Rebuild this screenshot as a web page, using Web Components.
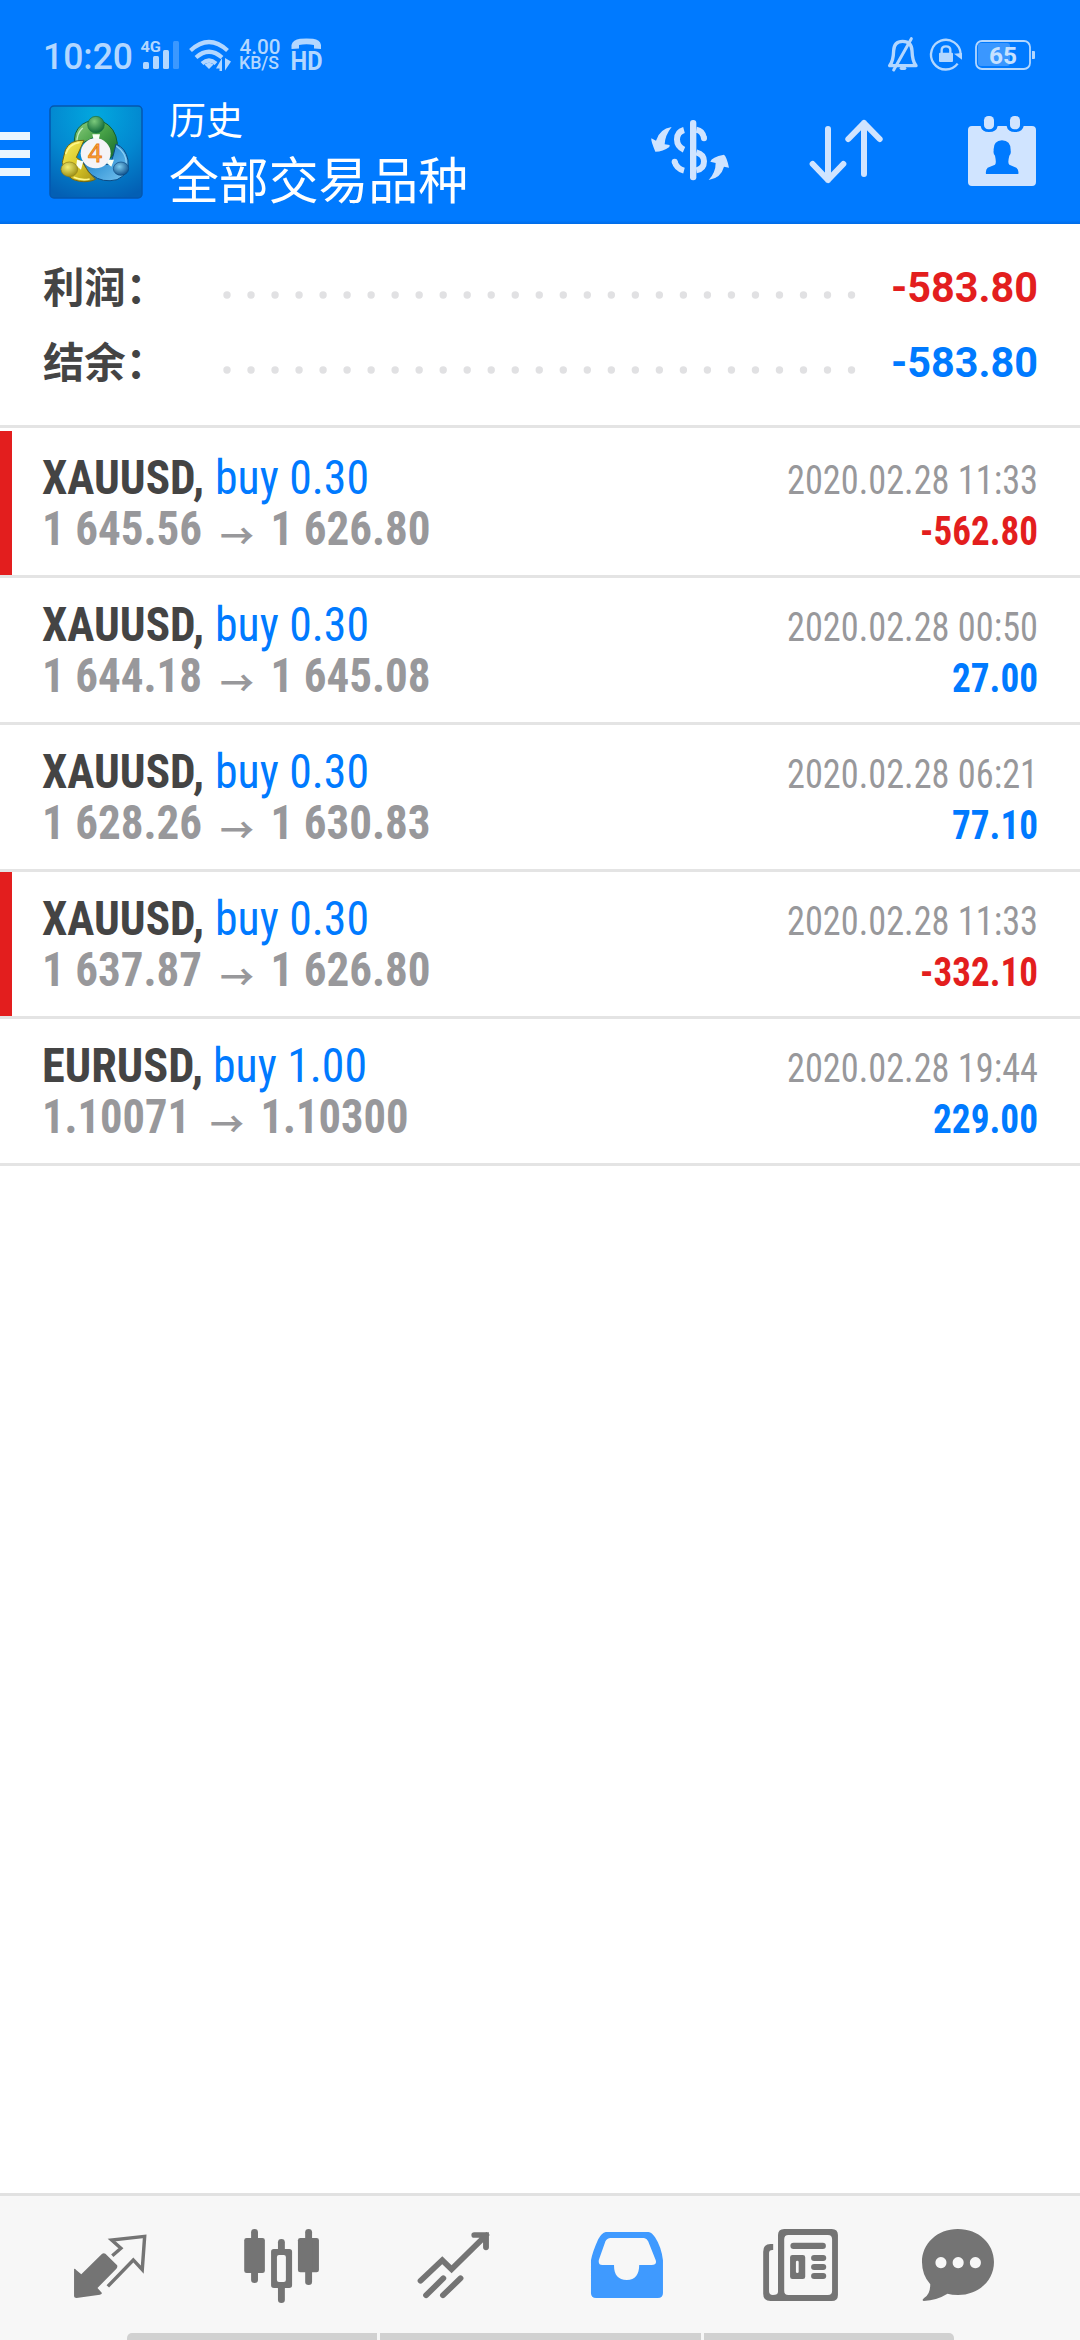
<!DOCTYPE html>
<html lang="zh-CN">
<head>
<meta charset="utf-8">
<title>历史</title>
<style>
html,body{margin:0;padding:0;background:#fff}
body{font-family:Roboto,"Noto Sans CJK SC",sans-serif}
</style>
</head>
<body>
<history-app></history-app>
<script>
class BaseElement extends HTMLElement {
  connectedCallback() {
    if (this.shadowRoot) return;
    this.attachShadow({ mode: 'open' }).innerHTML = this.render();
  }
  a(name, fallback = '') { return this.getAttribute(name) ?? fallback; }
}

/* A single line of text set to an exact advance width. */
customElements.define('fit-text', class extends BaseElement {
  render() {
    const w = this.a('w');
    return `<style>:host{display:block;flex:none}svg{display:block;overflow:visible}
      text{font:${this.a('weight', '400')} ${this.a('size')}px ${this.a('family', "'Roboto Condensed',Roboto,'Noto Sans CJK SC',sans-serif")};fill:currentColor;white-space:pre}</style>
      <svg width="${w}" height="${this.a('h')}"><text x="0" y="${this.a('base')}" textLength="${w}" lengthAdjust="spacingAndGlyphs">${this.a('text')}</text></svg>`;
  }
});

customElements.define('status-bar', class extends BaseElement {
  render() {
    return `<style>:host{display:flex;height:80px;color:#b3d7ff;padding:0 44px 0 43px}
      svg{display:block;flex:none;fill:currentColor;overflow:visible}.sp{flex:1}
      text{font-family:Roboto,sans-serif}</style>
    <fit-text w="90" size="36" h="80" base="69" weight="500" family="Roboto,sans-serif" text="10:20"></fit-text>
    <svg width="50" height="80" viewBox="133 0 50 80"><text x="140.5" y="52" font-size="15.5" font-weight="700" textLength="20.5" lengthAdjust="spacingAndGlyphs">4G</text>
      <rect x="143" y="62" width="6" height="7" rx="1.5"/><rect x="153" y="56" width="6" height="13" rx="1.5"/><rect x="163" y="50" width="6" height="19" rx="1.5"/><rect x="173" y="41" width="6" height="28" rx="1.5" opacity=".33"/></svg>
    <svg width="55" height="80" viewBox="183 0 55 80"><g fill="none" stroke="currentColor" stroke-width="4.2"><path d="M190.5 50.500Q209 33.500 227.500 50.500M196 57.500Q209 46 222 57.500M202 63.500Q209 57.500 216 63.500"/></g><path d="M204.500 64.500Q209 61 213.500 64.500L209 69z"/><path d="M216 68.500L222 58V71H219.500V68.500zM225 58L231 61.500L225 70.500z"/></svg>
    <svg width="52" height="80" viewBox="238 0 52 80"><text x="239.500" y="53.500" font-size="20.500" font-weight="500" textLength="41" lengthAdjust="spacingAndGlyphs">4.00</text><text x="239" y="69" font-size="18" font-weight="500" textLength="40" lengthAdjust="spacingAndGlyphs">KB/S</text></svg>
    <svg width="34" height="80" viewBox="290 0 34 80"><path d="M291.500 49V45Q293 39.500 300 38.800Q306.500 38.200 313 38.800Q320 39.500 321 45V49L314 48.500V45Q306.500 43.500 299 45V48.500z"/><text x="290.500" y="70" font-size="25" font-weight="700" textLength="32" lengthAdjust="spacingAndGlyphs">HD</text></svg>
    <span class="sp"></span>
    <svg width="46" height="80" viewBox="884 0 46 80"><g transform="translate(620 20) scale(.33333)" fill="none" stroke="currentColor" stroke-width="10"><path d="M809 137H888Q877 124 876 92Q875 64 848 64Q822 64 821 92Q820 124 809 137z" stroke-linejoin="round"/><path d="M821 150L874 56" stroke-linecap="round" stroke-width="9"/><path d="M844 145h10" stroke-linecap="round"/></g></svg>
    <svg width="44" height="80" viewBox="930 0 44 80"><g transform="translate(620 20) scale(.33333)"><path d="M1013 131A44.500 44.500 0 1 1 1022 102" fill="none" stroke="currentColor" stroke-width="7"/><path d="M1002 101L1026 119L1026 99z"/><rect x="957" y="98" width="42" height="28" rx="3"/><path d="M965 100V90Q965 79 978 79Q991 79 991 90V100" fill="none" stroke="currentColor" stroke-width="7"/></g></svg>
    <svg width="62" height="80" viewBox="974 0 62 80"><rect x="978" y="43" width="32" height="23" rx="3" opacity=".32"/><rect x="976" y="41" width="54" height="28" rx="6" fill="none" stroke="currentColor" stroke-width="1.800"/><path d="M1032 51h2q1 0 1 1v6q0 1-1 1h-2z"/><text x="989" y="63.500" font-size="23" font-weight="700" textLength="28" lengthAdjust="spacingAndGlyphs" fill="#c6e1ff">65</text></svg>`;
  }
});

customElements.define('mt-logo', class extends BaseElement {
  render() {
    return `<style>:host{display:block;flex:none}svg{display:block}</style>
    <svg width="96" height="144" viewBox="48 80 96 144"><defs>
      <radialGradient id="bg" cx=".5" cy=".1" r=".95"><stop offset="0" stop-color="#02a8df"/><stop offset=".55" stop-color="#0387d0"/><stop offset="1" stop-color="#035fb4"/></radialGradient>
      <linearGradient id="g" x2="1" y2="1"><stop offset="0" stop-color="#8fce80"/><stop offset=".5" stop-color="#46a046"/><stop offset="1" stop-color="#15692c"/></linearGradient>
      <linearGradient id="y" x2="1" y2="1"><stop offset="0" stop-color="#f5ee62"/><stop offset=".5" stop-color="#dcc928"/><stop offset="1" stop-color="#a59216"/></linearGradient>
      <linearGradient id="b" x2="1" y2="1"><stop offset="0" stop-color="#1e6aa5"/><stop offset=".5" stop-color="#3d9cda"/><stop offset="1" stop-color="#79c4f0"/></linearGradient>
      <radialGradient id="gb" cx=".4" cy=".3" r=".7"><stop offset="0" stop-color="#7cca7c"/><stop offset="1" stop-color="#126a38"/></radialGradient>
      <radialGradient id="yb" cx=".4" cy=".35" r=".7"><stop offset="0" stop-color="#f1ee75"/><stop offset="1" stop-color="#9a8c12"/></radialGradient>
      <radialGradient id="bb" cx=".4" cy=".35" r=".7"><stop offset="0" stop-color="#7fcdf0"/><stop offset="1" stop-color="#0b4b87"/></radialGradient></defs>
      <rect x="50" y="106" width="92" height="92" rx="4" fill="url(#bg)" stroke="#0457ae" stroke-width="1.500"/>
      <g transform="translate(0 80) scale(.33333)" stroke-width="3">
        <path d="M225 202Q216 155 247 133Q272 116 307 124Q347 142 352 190Q351 215 331 235L301 216L286 170L247 190z" fill="url(#g)" stroke="#125d36"/>
        <path d="M231 191Q229 160 248 144" fill="none" stroke="#c4edc0" stroke-width="4"/>
        <path d="M348 192Q377 204 384 240Q391 281 351 299Q308 310 276 285Q256 269 250 244L291 256L332 252L341 222z" fill="url(#b)" stroke="#0b4a83"/>
        <path d="M349 198Q378 218 379 248" fill="none" stroke="#8ed2f6" stroke-width="4"/>
        <path d="M252 181Q209 179 196 210L187 247Q196 299 238 304Q266 308 287 298Q263 278 247 246L229 232z" fill="url(#y)" stroke="#766711"/>
        <path d="M239 187Q206 192 197 222M221 292Q244 302 269 297" fill="none" stroke="#fff687" stroke-width="5"/>
        <path d="M231 239L250 244L243 269L229 257zM324 239H342L334 260L321 250zM277 163H300L296 180H281z" fill="#f8fff4"/>
        <ellipse cx="288" cy="134" rx="25" ry="25" fill="url(#gb)" stroke="#176f3e" stroke-width="2"/>
        <ellipse cx="208" cy="268" rx="25" ry="22" fill="url(#yb)" stroke="#8c7c1c" stroke-width="2"/>
        <ellipse cx="363" cy="266" rx="23" ry="20" fill="url(#bb)" stroke="#0b4a83" stroke-width="2"/>
        <circle cx="287" cy="220" r="45" fill="#f4f4f7"/>
        <text x="264" y="246" font-family="Open Sans,sans-serif" font-size="77" font-weight="400" textLength="42" lengthAdjust="spacingAndGlyphs" fill="#ffb04a" stroke="#e67a13" stroke-width="3">4</text>
      </g></svg>`;
  }
});

customElements.define('app-bar', class extends BaseElement {
  render() {
    return `<style>:host{display:flex;height:144px;color:#d0e4ff}
      svg{display:block;flex:none;fill:currentColor}.t{flex:1;color:#fff;padding-left:25px}</style>
    <svg width="48" height="144" viewBox="0 80 48 144" style="color:#eaf6ff"><path d="M0 132h30v8H0zM0 150h30v8H0zM0 168h30v8H0z"/></svg>
    <mt-logo></mt-logo>
    <div class="t"><fit-text w="74" size="37.500" h="64" base="54" family="'Noto Sans CJK SC',sans-serif" text="历史"></fit-text>
    <fit-text w="299" size="50" h="80" base="55" family="'Noto Sans CJK SC',sans-serif" text="全部交易品种"></fit-text></div>
    <svg width="120" height="144" viewBox="630 80 120 144"><g transform="translate(620 20) scale(.33333)">
      <rect x="210" y="300" width="19" height="181" rx="9"/>
      <path d="M192 330Q171 336 171 358Q171 380 192 389M229 329Q248 332 252 354M229 397Q252 403 252 424Q252 447 229 451M164 425Q169 446 192 452" fill="none" stroke="currentColor" stroke-width="18"/><circle cx="252" cy="355" r="9"/><circle cx="164" cy="425" r="9"/>
      <path d="M155 321Q118 327 108 362L94 355Q92 362 106 395Q129 395 148 381L149 375L134 373Q135 346 155 321z"/>
      <path d="M266 480Q287 458 287 429L271 425Q275 411 312 404Q320 410 327 443L312 440Q303 474 266 480z"/></g></svg>
    <svg width="160" height="144" viewBox="750 80 160 144"><g transform="translate(620 20) scale(.33333)" fill="none" stroke="currentColor" stroke-width="18" stroke-linecap="round" stroke-linejoin="round"><path d="M624 327V480M578 432L624 480L670 432M732 462V309M685 357L732 309L779 357"/></g></svg>
    <svg width="170" height="144" viewBox="910 80 170 144"><g transform="translate(620 20) scale(.33333)"><rect x="1092" y="288" width="30" height="40" rx="13"/><rect x="1170" y="288" width="30" height="40" rx="13"/>
      <path fill-rule="evenodd" d="M1056 318H1082Q1085 336 1107 336Q1130 336 1133 318H1160Q1163 336 1185 336Q1208 336 1211 318H1236Q1248 318 1248 330V486Q1248 498 1236 498H1056Q1044 498 1044 486V330Q1044 318 1056 318zM1146 361Q1119 362 1121 392Q1119 400 1125 407Q1130 430 1125 434L1103 443Q1096 449 1098 462H1195Q1197 449 1189 443L1168 434Q1162 430 1168 407Q1174 400 1172 392Q1173 362 1146 361z"/></g></svg>`;
  }
});

customElements.define('summary-line', class extends BaseElement {
  render() {
    const dots = Array.from({ length: 27 }, (_, i) => `<circle cx="${4 + i * 24.02}" cy="38" r="3.700"/>`).join('');
    return `<style>:host{display:flex;height:75px;padding:0 42px}
      .l{color:#444;width:180px;padding-left:1px}.d{display:block;fill:#e1e1e3;flex:1}.v{color:${this.a('color')}}</style>
    <fit-text class="l" w="124" size="42" h="75" base="46" weight="700" family="'Noto Sans CJK SC',sans-serif" text="${this.a('label')}"></fit-text>
    <svg class="d" height="75">${dots}</svg>
    <fit-text class="v" w="147" size="42" h="75" base="45" weight="700" family="Roboto,sans-serif" text="${this.a('value')}"></fit-text>`;
  }
});

customElements.define('trade-row', class extends BaseElement {
  render() {
    const eur = this.a('symbol').startsWith('EUR');
    const [w1, ax, bx, w2] = eur ? [148, 168, 218.5, 148] : [160, 178, 228.5, 160];
    const loss = this.a('profit').startsWith('-');
    const pw = loss ? 118 : { 5: 86, 6: 105 }[this.a('profit').length];
    return `<style>:host{display:flex;height:144px;border-bottom:3px solid #e4e4e4}
      .m{width:12px;background:${loss ? '#e31e1e' : 'transparent'};margin-right:30px}
      .l{flex:1}.top{display:flex}.s{color:#444;margin-right:${eur ? 10 : 11}px}.b,.win{color:#007aff}.loss{color:#e31e1e}
      .r{display:flex;flex-direction:column;align-items:flex-end;color:#98989b;padding-right:42px}
      svg{display:block;fill:#98989b;overflow:visible}text{font:700 48px 'Roboto Condensed',Roboto,sans-serif}
      .arrow{font:700 34px 'Noto Sans CJK SC',sans-serif}</style>
    <div class="m"></div>
    <div class="l"><div class="top"><fit-text class="s" w="${eur ? 161 : 162}" size="48" h="80" base="63" weight="700" text="${this.a('symbol')},"></fit-text><fit-text class="b" w="154" size="48" h="80" base="63" text="${this.a('action')}"></fit-text></div>
    <svg width="400" height="64"><text y="34"><tspan x="0" textLength="${w1}" lengthAdjust="spacingAndGlyphs">${this.a('open')}</tspan> <tspan class="arrow" x="${ax}" y="38" textLength="34" lengthAdjust="spacingAndGlyphs">→</tspan> <tspan x="${bx}" y="34" textLength="${w2}" lengthAdjust="spacingAndGlyphs">${this.a('close')}</tspan></text></svg></div>
    <div class="r"><fit-text w="251" size="40" h="80" base="63" text="${this.a('time')}"></fit-text>
    <fit-text class="${loss ? 'loss' : 'win'}" w="${pw}" size="40" h="64" base="34" weight="700" text="${this.a('profit')}"></fit-text></div>`;
  }
});

customElements.define('tab-bar', class extends BaseElement {
  render() {
    const icon = (x, w, body, color = '#747474') => `<svg width="${w}" height="137" viewBox="${x} 2196 ${w} 137" style="color:${color}"><g transform="translate(${x < 540 ? 0 : 540} 2180) scale(.34444 .33333)">${body}</g></svg>`;
    return `<style>:host{display:block;background:#f7f7f7;border-top:3px solid #e1e1e1;height:147px;box-sizing:border-box;flex:none}
      nav{display:flex;height:137px}svg{display:block;fill:currentColor;flex:none}
      .home{display:flex;gap:3px;height:7px;padding:0 126px 0 127px}.home i{background:#d1d1d1;flex:250 0 0}.home i:nth-child(2){flex-grow:320}
      .home i:first-child{border-top-left-radius:5px}.home i:last-child{border-top-right-radius:5px}</style>
    <nav>
    ${icon(0, 190, `<path d="M215 267Q218 264 222 271L236 283L295 223Q300 217 306 221L340 256Q342 261 338 266L283 324L296 339Q296 343 290 344L222 354Q215 354 215 349z"/><path d="M326 227L351 205L324 180L420 169L413 269L387 240L313 319" fill="none" stroke="currentColor" stroke-width="10"/>`)}
    ${icon(190, 180, `<rect x="709" y="174" width="60" height="105" rx="7"/><rect x="729" y="147" width="20" height="162" rx="10"/><rect x="865" y="174" width="61" height="103" rx="7"/><rect x="886" y="147" width="20" height="168" rx="10"/><rect x="807" y="177" width="20" height="45" rx="10"/><rect x="807" y="315" width="20" height="54" rx="10"/><path fill-rule="evenodd" d="M795 207h45q8 0 8 8v101q0 8-8 8h-45q-8 0-8-8V215q0-8 8-8zM810 225q-6 0-6 6v69q0 6 6 6h14q6 0 6-6v-69q0-6-6-6z"/>`)}
    ${icon(370, 170, `<path d="M1221 302L1284 241L1311 268L1412 165M1377 165H1411V202M1237 346L1287 295M1286 346L1337 295" fill="none" stroke="currentColor" stroke-width="17" stroke-linecap="round"/>`)}
    ${icon(540, 180, `<path fill-rule="evenodd" d="M191 156H315Q325 157 334 172Q352 200 357 241V339Q357 354 342 354H163Q148 354 148 339V241Q152 217 169 178Q179 158 191 156zM205 174Q194 175 190 184L171 239Q168 255 181 255H215C214 282 226 300 252 300C277 300 288 282 288 255H324Q340 255 336 241L314 184Q310 175 302 174z"/>`, '#3f9aff')}
    ${icon(720, 170, `<path fill-rule="evenodd" d="M709 147H847Q865 147 865 165V345Q865 363 847 363H669Q648 363 648 341V215Q648 192 669 192H677V210Q665 209 665 219V334Q665 345 676 345Q691 345 691 335V165Q691 147 709 147zM721 165Q709 165 709 178V332Q709 345 721 345H836Q848 345 848 332V178Q848 165 836 165z"/><rect x="727" y="188" width="103" height="19" rx="9"/><path fill-rule="evenodd" d="M733 225h30q7 0 7 7v58q0 7-7 7h-30q-7 0-7-7v-58q0-7 7-7zM747 242q-4 0-4 4v29q0 4 4 4t4-4v-29q0-4-4-4z"/><rect x="787" y="225" width="44" height="18" rx="9"/><rect x="787" y="252" width="44" height="18" rx="9"/><rect x="787" y="279" width="44" height="18" rx="9"/>`)}
    ${icon(890, 190, `<path fill-rule="evenodd" d="M1213 147C1274 147 1318 191 1318 246C1318 301 1274 345 1214 345Q1195 345 1183 341Q1152 361 1114 363Q1107 361 1115 354Q1133 344 1133 313Q1109 285 1109 246C1109 191 1153 147 1213 147zM1164 231a16 17 0 1 0 .1 0zM1214 231a16 17 0 1 0 .1 0zM1264 231a16 17 0 1 0 .1 0z"/>`)}
    </nav><div class="home"><i></i><i></i><i></i></div>`;
  }
});

customElements.define('history-app', class extends BaseElement {
  render() {
    const trades = [
      ['XAUUSD', 'buy 0.30', '1 645.56', '1 626.80', '2020.02.28 11:33', '-562.80'],
      ['XAUUSD', 'buy 0.30', '1 644.18', '1 645.08', '2020.02.28 00:50', '27.00'],
      ['XAUUSD', 'buy 0.30', '1 628.26', '1 630.83', '2020.02.28 06:21', '77.10'],
      ['XAUUSD', 'buy 0.30', '1 637.87', '1 626.80', '2020.02.28 11:33', '-332.10'],
      ['EURUSD', 'buy 1.00', '1.10071', '1.10300', '2020.02.28 19:44', '229.00']];
    return `<style>:host{display:flex;flex-direction:column;width:1080px;height:2340px;background:#fff;overflow:hidden}
      header{height:224px;background:linear-gradient(#007aff 220px,#006be6 224px);flex:none}
      section{height:168px;padding-top:33px;border-bottom:3px solid #e4e4e4;flex:none}main{flex:1;padding-top:3px}</style>
    <header><status-bar></status-bar><app-bar></app-bar></header>
    <section><summary-line label="利润：" value="-583.80" color="#e31e1e"></summary-line><summary-line label="结余：" value="-583.80" color="#007aff"></summary-line></section>
    <main>${trades.map(t => `<trade-row symbol="${t[0]}" action="${t[1]}" open="${t[2]}" close="${t[3]}" time="${t[4]}" profit="${t[5]}"></trade-row>`).join('')}</main>
    <tab-bar></tab-bar>`;
  }
});
</script>
</body>
</html>
